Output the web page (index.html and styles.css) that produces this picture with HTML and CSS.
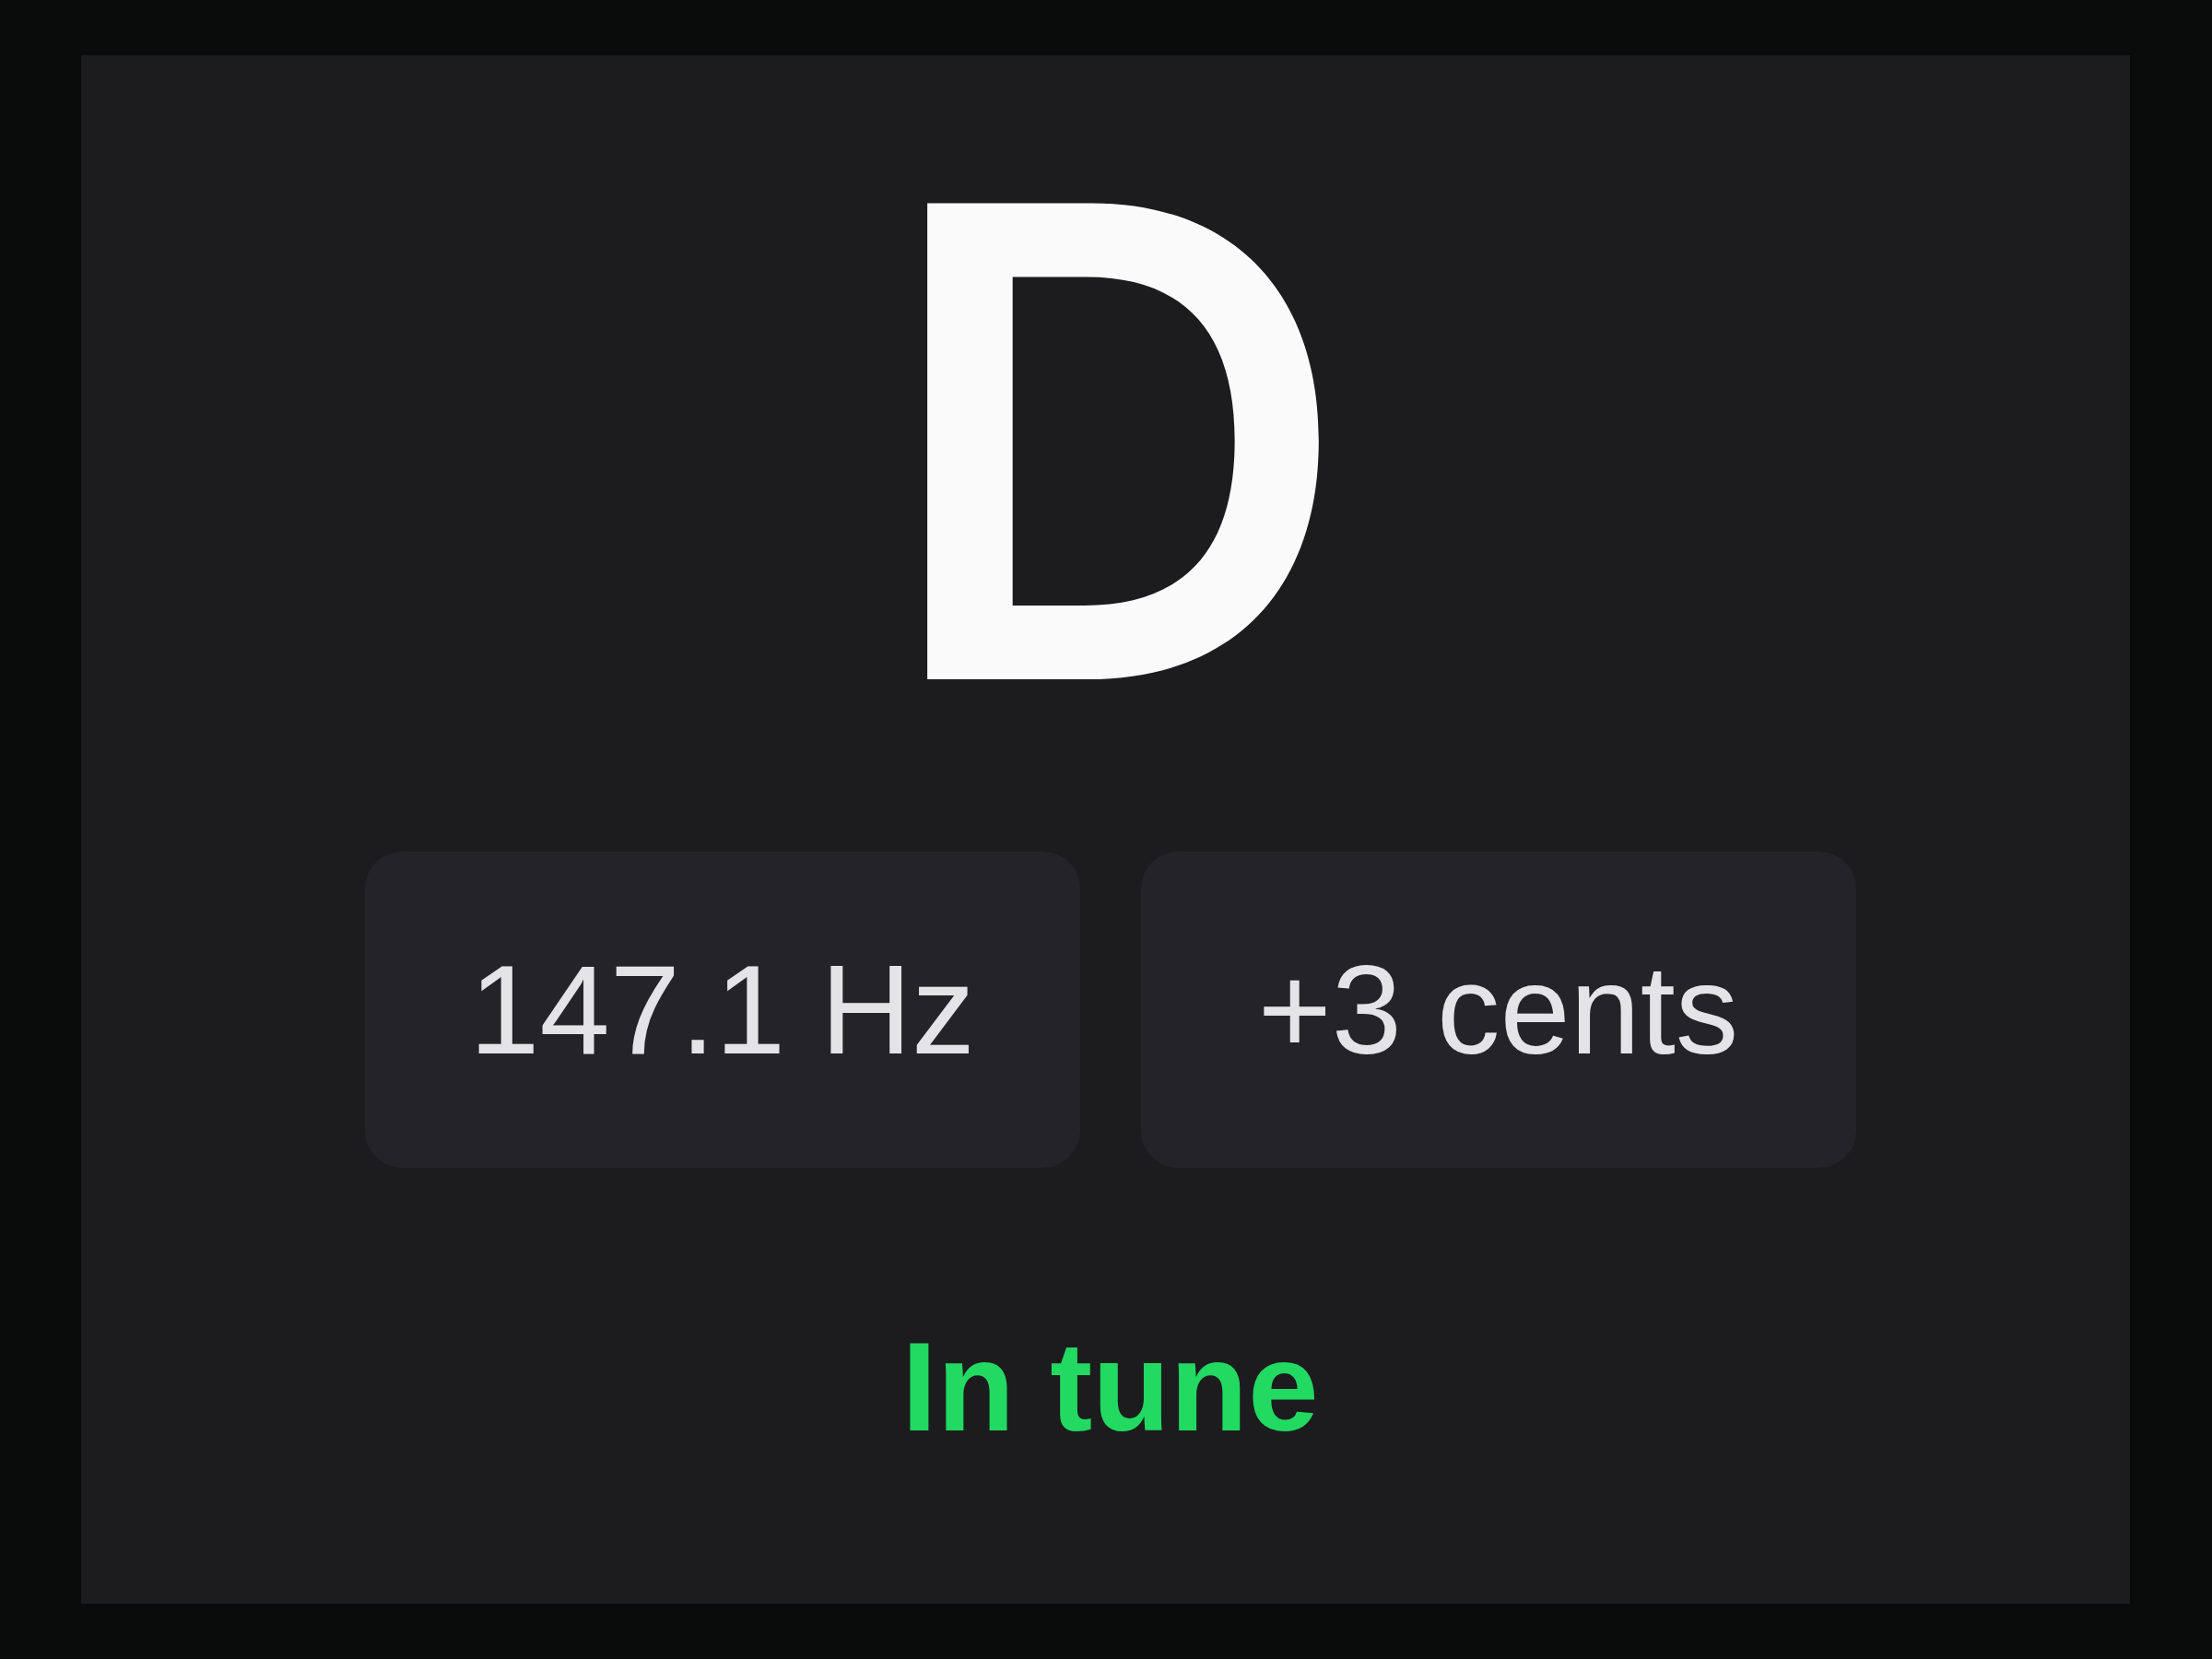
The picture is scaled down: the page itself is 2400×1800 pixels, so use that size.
FILE: index.html
```html
<!DOCTYPE html>
<html lang="en">
<head>
<meta charset="utf-8">
<title>Tuner</title>
<link rel="stylesheet" href="styles.css">
</head>
<body>
<main class="tuner">
  <div class="note">D</div>
  <div class="readouts">
    <div class="readout">147.1 Hz</div>
    <div class="readout">+3 cents</div>
  </div>
  <div class="status">In tune</div>
</main>
</body>
</html>
```

FILE: styles.css
```css
html, body {
  margin: 0;
  padding: 0;
}
body {
  background: #0a0c0c;
  font-family: "Liberation Sans", Arial, sans-serif;
  padding: 60px 89px 60px 88px;
}
.tuner {
  height: 1680px;
  box-sizing: border-box;
  background: #1c1c1e;
  display: flex;
  flex-direction: column;
  align-items: center;
  padding-top: 64px;
}
.note {
  font-family: Inter, "Liberation Sans", sans-serif;
  font-size: 710px;
  line-height: 1;
  font-weight: 600;
  color: #fafafa;
  margin-left: 22px;
}
.readouts {
  display: flex;
  gap: 66px;
  margin-top: 90px;
  margin-left: 10px;
}
.readout {
  width: 776px;
  height: 343px;
  box-sizing: border-box;
  background: #242428;
  border-radius: 40px;
  display: flex;
  align-items: center;
  justify-content: center;
  font-size: 137px;
  line-height: 1;
  color: #e4e4e7;
}
.status {
  margin-top: 168px;
  font-size: 138px;
  line-height: 1;
  font-weight: 700;
  color: #22d962;
  margin-left: 10px;
}
```
